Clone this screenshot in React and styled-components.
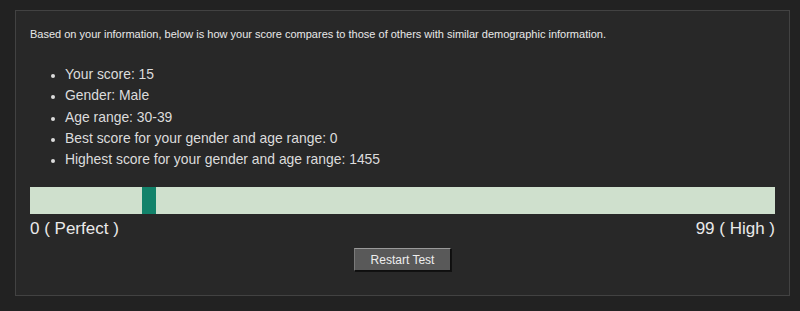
import React from 'react';
import styled, { createGlobalStyle } from 'styled-components';

const GlobalStyle = createGlobalStyle`
    html, body {
        margin: 0;
        padding: 0;
        background: #222222;
    }

    body {
        font-family: 'Liberation Sans', Arial, sans-serif;
        width: 800px;
        height: 311px;
        overflow: hidden;
    }
`;

const Page = styled.div`
    padding: 10px 10px 0 15px;
`;

const Panel = styled.section`
    box-sizing: border-box;
    width: 775px;
    height: 286px;
    background: #282828;
    border: 1px solid #424242;
    padding: 16px 14px 0 14px;
    color: #e6e6e6;
`;

const Intro = styled.p`
    margin: 0;
    font-size: 11px;
    line-height: 14px;
    color: #e8e8e8;
`;

const Stats = styled.ul`
    margin: 23px 0 0 0;
    padding: 0 0 0 35px;
    font-size: 13.9px;
    line-height: 21.3px;
    color: #dcdcdc;

    li::marker {
        font-size: 12px;
    }
`;

const Scale = styled.div`
    margin-top: 17px;
`;

const Track = styled.div`
    position: relative;
    height: 27px;
    background: #cfe0cd;
`;

const Marker = styled.div`
    position: absolute;
    top: 0;
    bottom: 0;
    width: 14px;
    background: #12826a;
`;

const Labels = styled.div`
    display: flex;
    justify-content: space-between;
    margin-top: 4px;
    font-size: 17px;
    line-height: 22px;
    color: #eaeaea;
`;

const Actions = styled.div`
    display: flex;
    justify-content: center;
    margin-top: 8px;
`;

const Button = styled.button`
    box-sizing: border-box;
    width: 97px;
    height: 23px;
    padding: 0;
    background: #595959;
    border: 1px solid #0e0e0e;
    border-top-color: #9a9a9a;
    border-left-color: #7a7a7a;
    box-shadow: 1px 1px 0 #111;
    color: #eeeeee;
    font-family: 'Liberation Sans', Arial, sans-serif;
    font-size: 12px;
`;

const stats = [
    'Your score: 15',
    'Gender: Male',
    'Age range: 30-39',
    'Best score for your gender and age range: 0',
    'Highest score for your gender and age range: 1455',
];

export default function App() {
    const score = 15;
    const max = 99;
    const trackWidth = 745;
    const left = Math.round((score / max) * trackWidth) - 1;

    return (
        <>
            <GlobalStyle />
            <Page>
                <Panel>
                    <Intro>
                        Based on your information, below is how your score compares to those of others with similar demographic information.
                    </Intro>
                    <Stats>
                        {stats.map((s) => (
                            <li key={s}>{s}</li>
                        ))}
                    </Stats>
                    <Scale>
                        <Track>
                            <Marker style={{ left }} />
                        </Track>
                        <Labels>
                            <span>0 ( Perfect )</span>
                            <span>99 ( High )</span>
                        </Labels>
                    </Scale>
                    <Actions>
                        <Button type="button">Restart Test</Button>
                    </Actions>
                </Panel>
            </Page>
        </>
    );
}
